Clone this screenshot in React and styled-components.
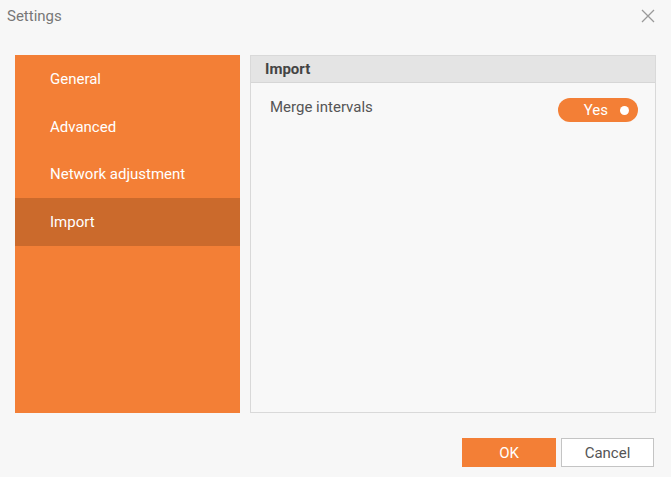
import styled, { createGlobalStyle } from "styled-components";

const GlobalStyle = createGlobalStyle`
    html, body {
        margin: 0;
        padding: 0;
        background: #f7f7f7;
    }
    body {
        font-family: Roboto, "Liberation Sans", sans-serif;
        font-size: 15px;
    }
`;

const Dialog = styled.div`
    width: 671px;
    height: 477px;
    display: flex;
    flex-direction: column;
    background: #f7f7f7;
    box-sizing: border-box;
`;

const TitleBar = styled.div`
    height: 32px;
    display: flex;
    align-items: center;
    justify-content: space-between;
    padding: 0 15px 0 7px;
    color: #777;
    font-size: 15px;
`;

const CloseButton = styled.button`
    border: none;
    background: none;
    padding: 0;
    width: 16px;
    height: 16px;
    display: flex;
    align-items: center;
    justify-content: center;
    cursor: pointer;
`;

const Body = styled.div`
    display: flex;
    gap: 10px;
    margin: 23px 15px 0 15px;
    height: 358px;
`;

const Sidebar = styled.nav`
    width: 225px;
    background: #f37f36;
    display: flex;
    flex-direction: column;
`;

const NavItem = styled.div`
    height: 47.7px;
    flex-shrink: 0;
    display: flex;
    align-items: center;
    padding-left: 35px;
    color: #fff;
    font-size: 15px;
    background: ${(p) => (p.active ? "#cb6a2c" : "transparent")};
    cursor: pointer;
`;

const Panel = styled.section`
    flex: 1;
    border: 1px solid #d9d9d9;
    background: #f8f8f8;
    display: flex;
    flex-direction: column;
`;

const PanelHeader = styled.div`
    height: 26px;
    background: #e4e4e4;
    border-bottom: 1px solid #d6d6d6;
    display: flex;
    align-items: center;
    padding-left: 14px;
    font-weight: bold;
    font-size: 15px;
    color: #444;
`;

const Row = styled.div`
    display: flex;
    align-items: flex-start;
    justify-content: space-between;
    padding: 15px 17px 0 19px;
    color: #555;
    font-size: 15px;
`;

const Toggle = styled.div`
    width: 80px;
    height: 24px;
    border-radius: 12px;
    background: #f37f36;
    color: #fff;
    display: flex;
    align-items: center;
    justify-content: flex-end;
    gap: 12px;
    padding-right: 9px;
    box-sizing: border-box;
    font-size: 15px;
`;

const Knob = styled.span`
    width: 9px;
    height: 9px;
    border-radius: 50%;
    background: #fff;
`;

const Footer = styled.div`
    display: flex;
    justify-content: flex-end;
    gap: 5px;
    padding: 25px 17px 0 0;
`;

const Button = styled.button`
    width: ${(p) => (p.primary ? "94px" : "93px")};
    height: 29px;
    box-sizing: border-box;
    font-family: inherit;
    font-size: 15px;
    cursor: pointer;
    border: 1px solid ${(p) => (p.primary ? "#f37f36" : "#c4c4c4")};
    background: ${(p) => (p.primary ? "#f37f36" : "#fff")};
    color: ${(p) => (p.primary ? "#fff" : "#555")};
`;

const sections = ["General", "Advanced", "Network adjustment", "Import"];

export default function App() {
    return (
        <Dialog>
            <GlobalStyle />
            <TitleBar>
                <span>Settings</span>
                <CloseButton aria-label="Close">
                    <svg width="14" height="14" viewBox="0 0 14 14">
                        <path d="M1 1 L13 13 M13 1 L1 13" stroke="#999" strokeWidth="1.3" />
                    </svg>
                </CloseButton>
            </TitleBar>
            <Body>
                <Sidebar>
                    {sections.map((s) => (
                        <NavItem key={s} active={s === "Import"}>
                            {s}
                        </NavItem>
                    ))}
                </Sidebar>
                <Panel>
                    <PanelHeader>Import</PanelHeader>
                    <Row>
                        <span>Merge intervals</span>
                        <Toggle>
                            Yes
                            <Knob />
                        </Toggle>
                    </Row>
                </Panel>
            </Body>
            <Footer>
                <Button primary>OK</Button>
                <Button>Cancel</Button>
            </Footer>
        </Dialog>
    );
}
